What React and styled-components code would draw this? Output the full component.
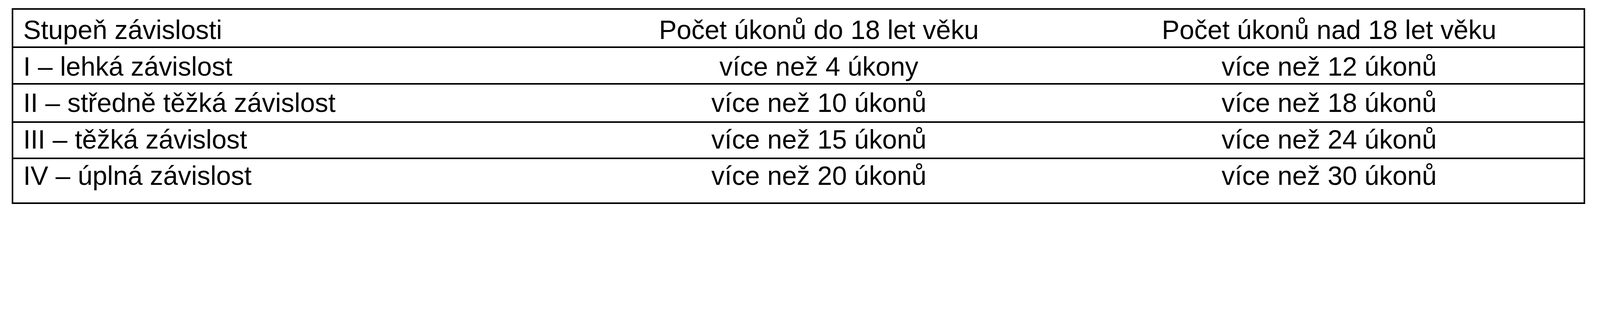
import React from "react";
import styled, { createGlobalStyle } from "styled-components";

// the reference was drawn for a 5914px wide page; every length is kept
// relative to the window width so the table scales with it
const u = (px) => `${(px / 59.14).toFixed(4)}vw`;

const rows = [
  { label: "Stupeň závislosti", young: "Počet úkonů do 18 let věku", adult: "Počet úkonů nad 18 let věku", height: 135, top: 25 },
  { label: "I – lehká závislost", young: "více než 4 úkony", adult: "více než 12 úkonů", height: 129, top: 20 },
  { label: "II – středně těžká závislost", young: "více než 10 úkonů", adult: "více než 18 úkonů", height: 136, top: 20 },
  { label: "III – těžká závislost", young: "více než 15 úkonů", adult: "více než 24 úkonů", height: 129, top: 13 },
  { label: "IV – úplná závislost", young: "více než 20 úkonů", adult: "více než 30 úkonů", height: 160, top: 13 },
];

export default function App() {
  return (
    <>
      <GlobalStyle />
      <Page>
        <Table>
          {rows.map((row, i) => (
            <Row key={i} $height={row.height} $top={row.top} $last={i === rows.length - 1}>
              <Cell>{row.label}</Cell>
              <Cell $center>{row.young}</Cell>
              <Cell $center>{row.adult}</Cell>
            </Row>
          ))}
        </Table>
      </Page>
    </>
  );
}

const GlobalStyle = createGlobalStyle`
  html, body {
    margin: 0;
    background: #fff;
  }
  body {
    font-family: "Liberation Sans", Arial, sans-serif;
    color: #000;
  }
`;

const Page = styled.div`
  width: 100vw;
  padding: ${u(31)} 0 ${u(44)} ${u(43)};
  box-sizing: border-box;
`;

const Table = styled.div`
  width: ${u(5816)};
  border: ${u(6)} solid #000;
  box-sizing: border-box;
  display: flex;
  flex-direction: column;
`;

const Row = styled.div`
  display: grid;
  grid-template-columns: ${u(2032)} ${u(1892)} ${u(1880)};
  height: ${(p) => u(p.$height + (p.$last ? 0 : 6))};
  box-sizing: border-box;
  padding-top: ${(p) => u(p.$top)};
  border-bottom: ${(p) => (p.$last ? "none" : `${u(6)} solid #000`)};
`;

const Cell = styled.div`
  font-size: ${u(98)};
  line-height: ${u(98)};
  white-space: nowrap;
  padding-left: ${(p) => (p.$center ? 0 : u(37))};
  text-align: ${(p) => (p.$center ? "center" : "left")};
`;
